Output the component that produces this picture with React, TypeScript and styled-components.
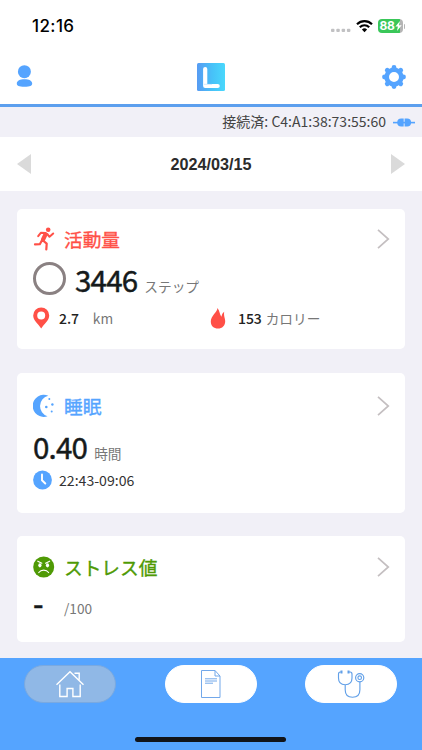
import React from "react";
import styled, { createGlobalStyle } from "styled-components";

const GlobalStyle = createGlobalStyle`
  * { box-sizing: border-box; }
  body { margin: 0; background: #f1f0f7; }
`;

const BLUE = "#55a4ff";
const RED = "#ff5047";
const GREEN = "#4f9a05";

const Screen = styled.div`
  width: 422px;
  height: 750px;
  display: flex;
  flex-direction: column;
  overflow: hidden;
  background: #f1f0f7;
  color: #222;
  font-family: "Noto Sans CJK JP", sans-serif;
  svg { display: block; flex: none; }
`;

const StatusBar = styled.div`
  height: 52px;
  flex: none;
  display: flex;
  justify-content: space-between;
  align-items: center;
  padding: 0 17px 0 32px;
  background: #fff;
`;

const Clock = styled.div`
  font: 500 17px/20px Inter, sans-serif;
  letter-spacing: 0.4px;
  color: #000;
`;

const StatusIcons = styled.div`
  display: flex;
  align-items: center;
  gap: 5px;
`;

const Battery = styled.div`
  display: flex;
  align-items: center;
`;

const BatteryLevel = styled.div`
  width: 25px;
  height: 14px;
  display: flex;
  align-items: center;
  padding-left: 2px;
  border-radius: 4px;
  background: linear-gradient(90deg, #3ac759 87%, #b5b5b5 87%);
  color: #fff;
  font: 700 12px/14px Inter, sans-serif;
  letter-spacing: -0.2px;
`;

const BatteryTip = styled.div`
  width: 1.5px;
  height: 5px;
  margin-left: 1px;
  border-radius: 0 2px 2px 0;
  background: #b5b5b5;
`;

const Header = styled.header`
  height: 55px;
  flex: none;
  display: flex;
  align-items: center;
  justify-content: space-between;
  padding: 0 16px 3px;
  border-bottom: 3px solid #5c9fee;
  background: #fff;
`;

const Connection = styled.div`
  height: 30px;
  flex: none;
  display: flex;
  align-items: center;
  justify-content: flex-end;
  gap: 7px;
  padding: 0 7px 0;
  font-size: 14px;
  line-height: 20px;
  color: #444;
`;

const ConnectionText = styled.span`
  margin-top: -3px;
`;

const DateBar = styled.div`
  height: 54px;
  flex: none;
  display: flex;
  align-items: center;
  justify-content: space-between;
  padding: 0 17px;
  background: #fff;
`;

const DateText = styled.div`
  font: bold 16.2px/20px "Liberation Sans", sans-serif;
  color: #2b2b2b;
`;

const Cards = styled.main`
  flex: 1;
  display: flex;
  flex-direction: column;
  gap: 23.5px;
  padding: 18px 17px 0;
`;

const Card = styled.section<{ $h: number; $top: number }>`
  height: ${(p) => p.$h}px;
  flex: none;
  padding: ${(p) => p.$top}px 15px 0 16px;
  border-radius: 5px;
  background: #fff;
`;

const TitleRow = styled.div<{ $color: string }>`
  height: 30px;
  display: flex;
  align-items: center;
  color: ${(p) => p.$color};
`;

const IconSlot = styled.div`
  width: 31px;
  flex: none;
`;

const Title = styled.h2`
  flex: 1;
  margin: 0;
  font-size: 18.7px;
  font-weight: 400;
  line-height: 28px;
  -webkit-text-stroke: 0.35px currentColor;
`;

const ValueRow = styled.div<{ $h: number; $top?: number }>`
  height: ${(p) => p.$h}px;
  padding-top: ${(p) => p.$top ?? 0}px;
  display: flex;
  align-items: center;
`;

const Figure = styled.div`
  display: flex;
  align-items: baseline;
  gap: 7px;
`;

const Ring = styled.div`
  width: 33px;
  height: 33px;
  margin: 0 9px 0 0;
  border: 3.5px solid #8a8182;
  border-radius: 50%;
`;

const Big = styled.span`
  font-size: 29.5px;
  font-weight: 400;
  line-height: 44px;
  letter-spacing: -0.8px;
  color: #151a1b;
  -webkit-text-stroke: 0.45px currentColor;
`;

const Unit = styled.span`
  font-size: 13.7px;
  line-height: 20px;
  color: #777;
`;

const MetaRow = styled.div`
  height: 30px;
  display: grid;
  grid-template-columns: 177px 1fr;
`;

const Meta = styled.div<{ $gap: number }>`
  display: flex;
  align-items: center;
  gap: ${(p) => p.$gap}px;
`;

const MetaIcon = styled.div<{ $w: number }>`
  width: ${(p) => p.$w}px;
  flex: none;
`;

const MetaValue = styled.span`
  font-size: 14px;
  font-weight: 500;
  line-height: 20px;
  letter-spacing: -0.1px;
  color: #222;
`;

const TimeRange = styled.span`
  font-size: 14.1px;
  line-height: 20px;
  color: #333;
`;

const Dash = styled.span`
  width: 31px;
  padding-bottom: 12px;
  font-size: 29.5px;
  font-weight: 500;
  line-height: 40px;
  color: #151a1b;
  -webkit-text-stroke: 0.4px currentColor;
`;

const Nav = styled.nav`
  height: 92px;
  flex: none;
  display: flex;
  flex-direction: column;
  justify-content: space-between;
  align-items: center;
  padding: 7px 25px 8px 24.4px;
  background: ${BLUE};
`;

const Tabs = styled.div`
  width: 100%;
  display: flex;
  justify-content: space-between;
`;

const Tab = styled.button<{ $active?: boolean }>`
  width: 92px;
  height: 38px;
  display: flex;
  align-items: center;
  justify-content: center;
  padding: 0;
  border: 1px solid ${(p) => (p.$active ? "#7aa9e0" : "#fff")};
  border-radius: 19px;
  background: ${(p) => (p.$active ? "#90b8e6" : "#fff")};
`;

const HomeIndicator = styled.div`
  width: 151px;
  height: 5px;
  border-radius: 3px;
  background: #11141a;
`;

const Chevron = () => (
  <svg width="13" height="20" viewBox="0 0 13 20" fill="none" stroke="#c4bfc1" strokeWidth="1.7">
    <path d="M1 .8 11.3 10 1 19.2" />
  </svg>
);

const CellularDots = () => (
  <svg width="20" height="14" viewBox="0 0 20 14" fill="#c1c1c3">
    {[0, 5.3, 10.6, 15.9].map((x) => (
      <rect key={x} x={x} y="9.7" width="3.5" height="3.3" rx="1" />
    ))}
  </svg>
);

const Wifi = () => (
  <svg width="17" height="13" viewBox="0 0 17 13" fill="none" stroke="#000" strokeWidth="2.2">
    <path d="M1 4.2a10.8 10.8 0 0 1 15 0M3.8 7.2a6.7 6.7 0 0 1 9.4 0" />
    <path d="M5.9 9.5a3.8 3.8 0 0 1 5.2 0l-2.6 2.8z" fill="#000" stroke="none" />
  </svg>
);

const Bolt = () => (
  <svg width="7" height="10" viewBox="0 0 7 10" fill="#fff">
    <path d="M5 0 .4 5.6h2.5L2 10l4.7-5.7H4.1z" />
  </svg>
);

const User = () => (
  <svg width="24" height="23" viewBox="0 0 24 23" fill={BLUE}>
    <circle cx="8.4" cy="6.7" r="6.5" />
    <path d="M.8 18.5C.8 15.7 4 14.200 8.500 14.200s7.700 1.500 7.700 4.300c0 2.300-2 3.300-7.700 3.300s-7.700-1-7.700-3.300z" />
  </svg>
);

const Logo = () => (
  <svg width="28" height="28" viewBox="0 0 28 28">
    <defs>
      <linearGradient id="logoFill" x1="0" y1="0" x2="1" y2="0">
        <stop offset="0" stopColor="#579bf3" />
        <stop offset=".55" stopColor="#47c2f8" />
        <stop offset="1" stopColor="#49d8fc" />
      </linearGradient>
    </defs>
    <rect width="28" height="28" rx="1.5" fill="url(#logoFill)" />
    <path d="M8.200 6v17h12.500" fill="none" stroke="#fff" strokeWidth="4.200" strokeLinecap="round" strokeLinejoin="round" />
    <path d="M7 21.300h8" stroke="#9fd2fb" strokeWidth=".5" />
  </svg>
);

const Gear = () => (
  <svg width="24" height="24" viewBox="0 0 24 24" fill="none" stroke={BLUE}>
    <circle cx="12" cy="12" r="7.300" strokeWidth="4.600" />
    {[0, 45, 90, 135, 180, 225, 270, 315].map((a) => (
      <path key={a} d="M12 4V2.500" strokeWidth="4.800" strokeLinecap="round" transform={`rotate(${a} 12 12)`} />
    ))}
  </svg>
);

const Plug = () => (
  <svg width="22" height="9" viewBox="0 0 22 9" fill={BLUE}>
    <rect y="3.800" width="22" height="1.600" />
    <path d="M10.700.6v8H8.200a4 4 0 0 1 0-8zM11.600.6v8h2.500a4 4 0 0 0 0-8z" />
  </svg>
);

const Arrow = ({ next }: { next?: boolean }) => (
  <svg width="14" height="20" viewBox="0 0 14 20" fill="#dadada">
    <path d={next ? "M0 0v20l14-10z" : "M14 0v20L0 10z"} />
  </svg>
);

const Runner = () => (
  <svg width="22" height="24" viewBox="0 0 22 24" fill="none" stroke={RED} strokeLinecap="round" strokeLinejoin="round">
    <circle cx="15.200" cy="2.700" r="2.300" fill={RED} stroke="none" />
    <path d="M5.200 9.200l2.600-3.400 5 .3M14.200 7l2.300 2.800 3.700-3.300" strokeWidth="2" />
    <path d="M12.400 7.600 10 12.600" strokeWidth="4.300" />
    <path d="M8.900 13.500 6.800 17.200 2 17.400M10 13.500l3.700 3.200-.4 5.800" strokeWidth="2.200" />
  </svg>
);

const Pin = () => (
  <svg width="17" height="22" viewBox="0 0 17 22">
    <path fillRule="evenodd" d="M8.200.4a8 8 0 0 0-8 8c0 5.200 4.800 8 8 13 3.200-5 8-7.800 8-13a8 8 0 0 0-8-8zm0 4a4 4 0 1 1 0 8 4 4 0 0 1 0-8z" fill={RED} />
  </svg>
);

const Flame = () => (
  <svg width="16" height="21" viewBox="0 0 16 21" fill={RED}>
    <path d="M7.400 0c.2 4-6.600 7.500-6.600 13.600C.8 18 3.800 20.600 8 20.600s7.200-2.800 7.200-7.300c0-3.200-1.700-5.200-1-9.500-1.500 1-2.500 2.700-2.700 5C9.600 6.500 9.900 3 7.400 0z" />
  </svg>
);

const Moon = () => (
  <svg width="22" height="24" viewBox="0 0 22 24" fill={BLUE}>
    <path d="M15.300 1.700A10.700 10.700 0 0 0 14.500 22.300 11.100 11.100 0 1 1 15.300 1.700z" />
    <circle cx="16.300" cy="5" r="1" />
    <circle cx="19.400" cy="10.500" r="1.200" />
    <circle cx="13.300" cy="13" r="1.300" />
    <circle cx="18.700" cy="17.500" r="1" />
  </svg>
);

const ClockIcon = () => (
  <svg width="20" height="20" viewBox="0 0 20 20">
    <circle cx="9.500" cy="10" r="9.400" fill={BLUE} />
    <path d="M9 4.500v5.800l3.300 3.200" fill="none" stroke="#fff" strokeWidth="1.900" strokeLinecap="round" />
  </svg>
);

const AngryFace = () => (
  <svg width="22" height="22" viewBox="0 0 22 22">
    <circle cx="10.700" cy="11" r="10.500" fill={GREEN} />
    <g fill="none" stroke="#fff" strokeWidth="1.200" strokeLinecap="round">
      <path d="M4.800 5.200l4 2M16.600 5.200l-4 2M5.800 16.500c2.300-3.200 7.500-3.200 9.800 0" />
    </g>
    <ellipse cx="6.900" cy="9.300" rx="1.600" ry="2.100" fill="#fff" />
    <ellipse cx="14.500" cy="9.300" rx="1.600" ry="2.100" fill="#fff" />
  </svg>
);

const Home = () => (
  <svg width="30" height="28" viewBox="0 0 30 28" fill="none" stroke="#fff" strokeWidth="1.400">
    <path d="M1.500 14.800 15 1.800l13.500 13M4.800 14.500v12h7.300v-8h5.800v8h7.300v-12M19.500 3.200h4.700v6.500" />
  </svg>
);

const Report = () => (
  <svg width="20" height="28" viewBox="0 0 20 28" fill="none" stroke="#72a8ea" strokeWidth="1">
    <path d="M.5.500h13.500l5 5.500v21.500H.5zM14 .500V6h5M4 8.800h12M4 11h12M4 13.200h8" />
  </svg>
);

const Stethoscope = () => (
  <svg width="28" height="28" viewBox="0 0 28 28" fill="none" stroke="#62a0e8" strokeWidth="1.150">
    <path d="M5 2H3.200C2 2 1.500 3 1.500 4.200V8c0 4 2.500 6.700 6.700 6.700S15 12 15 8V4.200C15 3 14.500 2 13.200 2h-1.700M8.200 14.700v5c0 5 3 7.500 7.300 7.500s7.400-2.500 7.400-7.500v-8" />
    <path d="M4.500.5v3M11.500.5v3" strokeWidth="2" />
    <circle cx="22.700" cy="7.700" r="4.100" />
    <circle cx="22.700" cy="7.700" r="1.800" />
  </svg>
);

export default function App() {
  return (
    <Screen>
      <GlobalStyle />
      <StatusBar>
        <Clock>12:16</Clock>
        <StatusIcons>
          <CellularDots />
          <Wifi />
          <Battery>
            <BatteryLevel>88<Bolt /></BatteryLevel>
            <BatteryTip />
          </Battery>
        </StatusIcons>
      </StatusBar>
      <Header>
        <User />
        <Logo />
        <Gear />
      </Header>
      <Connection>
        <ConnectionText>接続済: C4:A1:38:73:55:60</ConnectionText>
        <Plug />
      </Connection>
      <DateBar>
        <Arrow />
        <DateText>2024/03/15</DateText>
        <Arrow next />
      </DateBar>
      <Cards>
        <Card $h={140} $top={15}>
          <TitleRow $color={RED}>
            <IconSlot><Runner /></IconSlot>
            <Title>活動量</Title>
            <Chevron />
          </TitleRow>
          <ValueRow $h={49}>
            <Ring />
            <Figure><Big>3446</Big><Unit>ステップ</Unit></Figure>
          </ValueRow>
          <MetaRow>
            <Meta $gap={14}>
              <Meta $gap={6}>
                <MetaIcon $w={20}><Pin /></MetaIcon>
                <MetaValue>2.7</MetaValue>
              </Meta>
              <Unit>km</Unit>
            </Meta>
            <Meta $gap={4}>
              <MetaIcon $w={24}><Flame /></MetaIcon>
              <MetaValue>153</MetaValue>
              <Unit>カロリー</Unit>
            </Meta>
          </MetaRow>
        </Card>
        <Card $h={140} $top={18}>
          <TitleRow $color={BLUE}>
            <IconSlot><Moon /></IconSlot>
            <Title>睡眠</Title>
            <Chevron />
          </TitleRow>
          <ValueRow $h={49} $top={2}>
            <Figure><Big>0.40</Big><Unit>時間</Unit></Figure>
          </ValueRow>
          <Meta $gap={6}>
            <MetaIcon $w={20}><ClockIcon /></MetaIcon>
            <TimeRange>22:43-09:06</TimeRange>
          </Meta>
        </Card>
        <Card $h={106} $top={16}>
          <TitleRow $color={GREEN}>
            <IconSlot><AngryFace /></IconSlot>
            <Title>ストレス値</Title>
            <Chevron />
          </TitleRow>
          <ValueRow $h={50} $top={2}>
            <Dash>-</Dash>
            <Unit>/100</Unit>
          </ValueRow>
        </Card>
      </Cards>
      <Nav>
        <Tabs>
          <Tab $active aria-label="ホーム"><Home /></Tab>
          <Tab aria-label="レポート"><Report /></Tab>
          <Tab aria-label="診断"><Stethoscope /></Tab>
        </Tabs>
        <HomeIndicator />
      </Nav>
    </Screen>
  );
}
